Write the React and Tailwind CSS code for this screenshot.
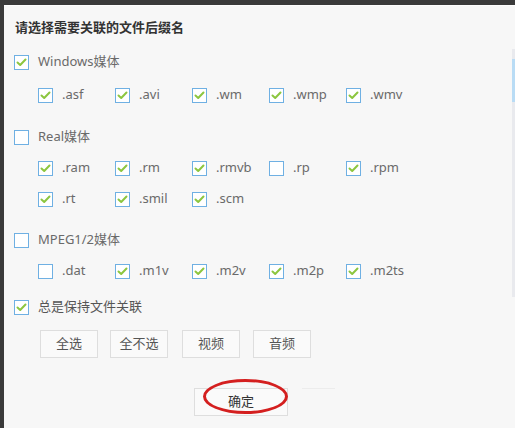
import React from 'react';

const Box = ({ checked }) => (
    <span className="w-[15px] h-[15px] shrink-0 border border-[#6fb0e3] bg-white flex items-center justify-center">
        {checked && (
            <svg width="11" height="9" viewBox="0 0 11 9" fill="none">
                <path d="M1.5 4.5 L4.2 7 L9.5 1.5" stroke="#8cc63f" strokeWidth="2" strokeLinecap="round" strokeLinejoin="round" />
            </svg>
        )}
    </span>
);

const Check = ({ checked, label, dark }) => (
    <label className="flex items-center gap-[9px] h-5">
        <Box checked={checked} />
        <span className={dark ? 'text-[#555]' : 'text-[#6a6a6a]'}>{label}</span>
    </label>
);

const ExtRow = ({ items, className = '' }) => (
    <div className={`grid grid-cols-[77px_77px_77px_77px_77px] pl-[24px] ${className}`}>
        {items.map(([name, on]) => (
            <Check key={name} checked={on} label={name} />
        ))}
    </div>
);

const Btn = ({ children }) => (
    <button className="w-[58px] h-[28px] border border-[#dedede] bg-[#fafafa] text-[#555] text-[13px]">
        {children}
    </button>
);

export default function App() {
    return (
        <div
            className="w-[515px] h-[428px] bg-[#3a3a3a] pt-[5px] pl-[4px] overflow-hidden"
            style={{ fontFamily: '"Noto Sans", "Noto Sans CJK SC", sans-serif' }}
        >
            <div className="relative h-full bg-[#f7f7f7] border-t border-[#fdfdfd] pl-[10px] pt-[11px] text-[13px]">
                <h2 className="h-5 leading-5 pl-[1px] font-bold text-[#333] text-[13px]">请选择需要关联的文件后缀名</h2>

                {/* Windows */}
                <div className="mt-[15px]">
                    <Check checked label="Windows媒体" />
                </div>
                <ExtRow
                    className="mt-[13px]"
                    items={[['.asf', true], ['.avi', true], ['.wm', true], ['.wmp', true], ['.wmv', true]]}
                />

                {/* Real */}
                <div className="mt-[22px]">
                    <Check checked={false} label="Real媒体" />
                </div>
                <ExtRow
                    className="mt-[11px]"
                    items={[['.ram', true], ['.rm', true], ['.rmvb', true], ['.rp', false], ['.rpm', true]]}
                />
                <ExtRow className="mt-[11px]" items={[['.rt', true], ['.smil', true], ['.scm', true]]} />

                {/* MPEG */}
                <div className="mt-[21px]">
                    <Check checked={false} label="MPEG1/2媒体" />
                </div>
                <ExtRow
                    className="mt-[11px]"
                    items={[['.dat', false], ['.m1v', true], ['.m2v', true], ['.m2p', true], ['.m2ts', true]]}
                />

                <div className="mt-[16px]">
                    <Check checked label="总是保持文件关联" dark />
                </div>

                <div className="flex pl-[26px] mt-[13px]">
                    <Btn>全选</Btn>
                    <div className="ml-[12px]"><Btn>全不选</Btn></div>
                    <div className="ml-[14px]"><Btn>视频</Btn></div>
                    <div className="ml-[13px]"><Btn>音频</Btn></div>
                </div>

                <div className="flex mt-[30px] pl-[180px]">
                    <div className="relative">
                        <button className="w-[94px] h-[28px] border border-[#dedede] bg-[#fafafa] text-[#333] text-[13px]">
                            确定
                        </button>
                        <span className="absolute left-[9px] top-[-9px] w-[85px] h-[35px] rounded-[50%] border-[3px] border-[#d41f1f] pointer-events-none" />
                    </div>
                    <div className="ml-[14px] w-[33px] h-[28px] border-t border-[#ececec]" />
                </div>

                {/* scrollbar */}
                <div className="absolute right-0 top-[43px] w-[3px] h-[248px] bg-[#e9eaee]">
                    <div className="mt-[10px] h-[43px] bg-[#b9dcf5]" />
                </div>
            </div>
        </div>
    );
}
